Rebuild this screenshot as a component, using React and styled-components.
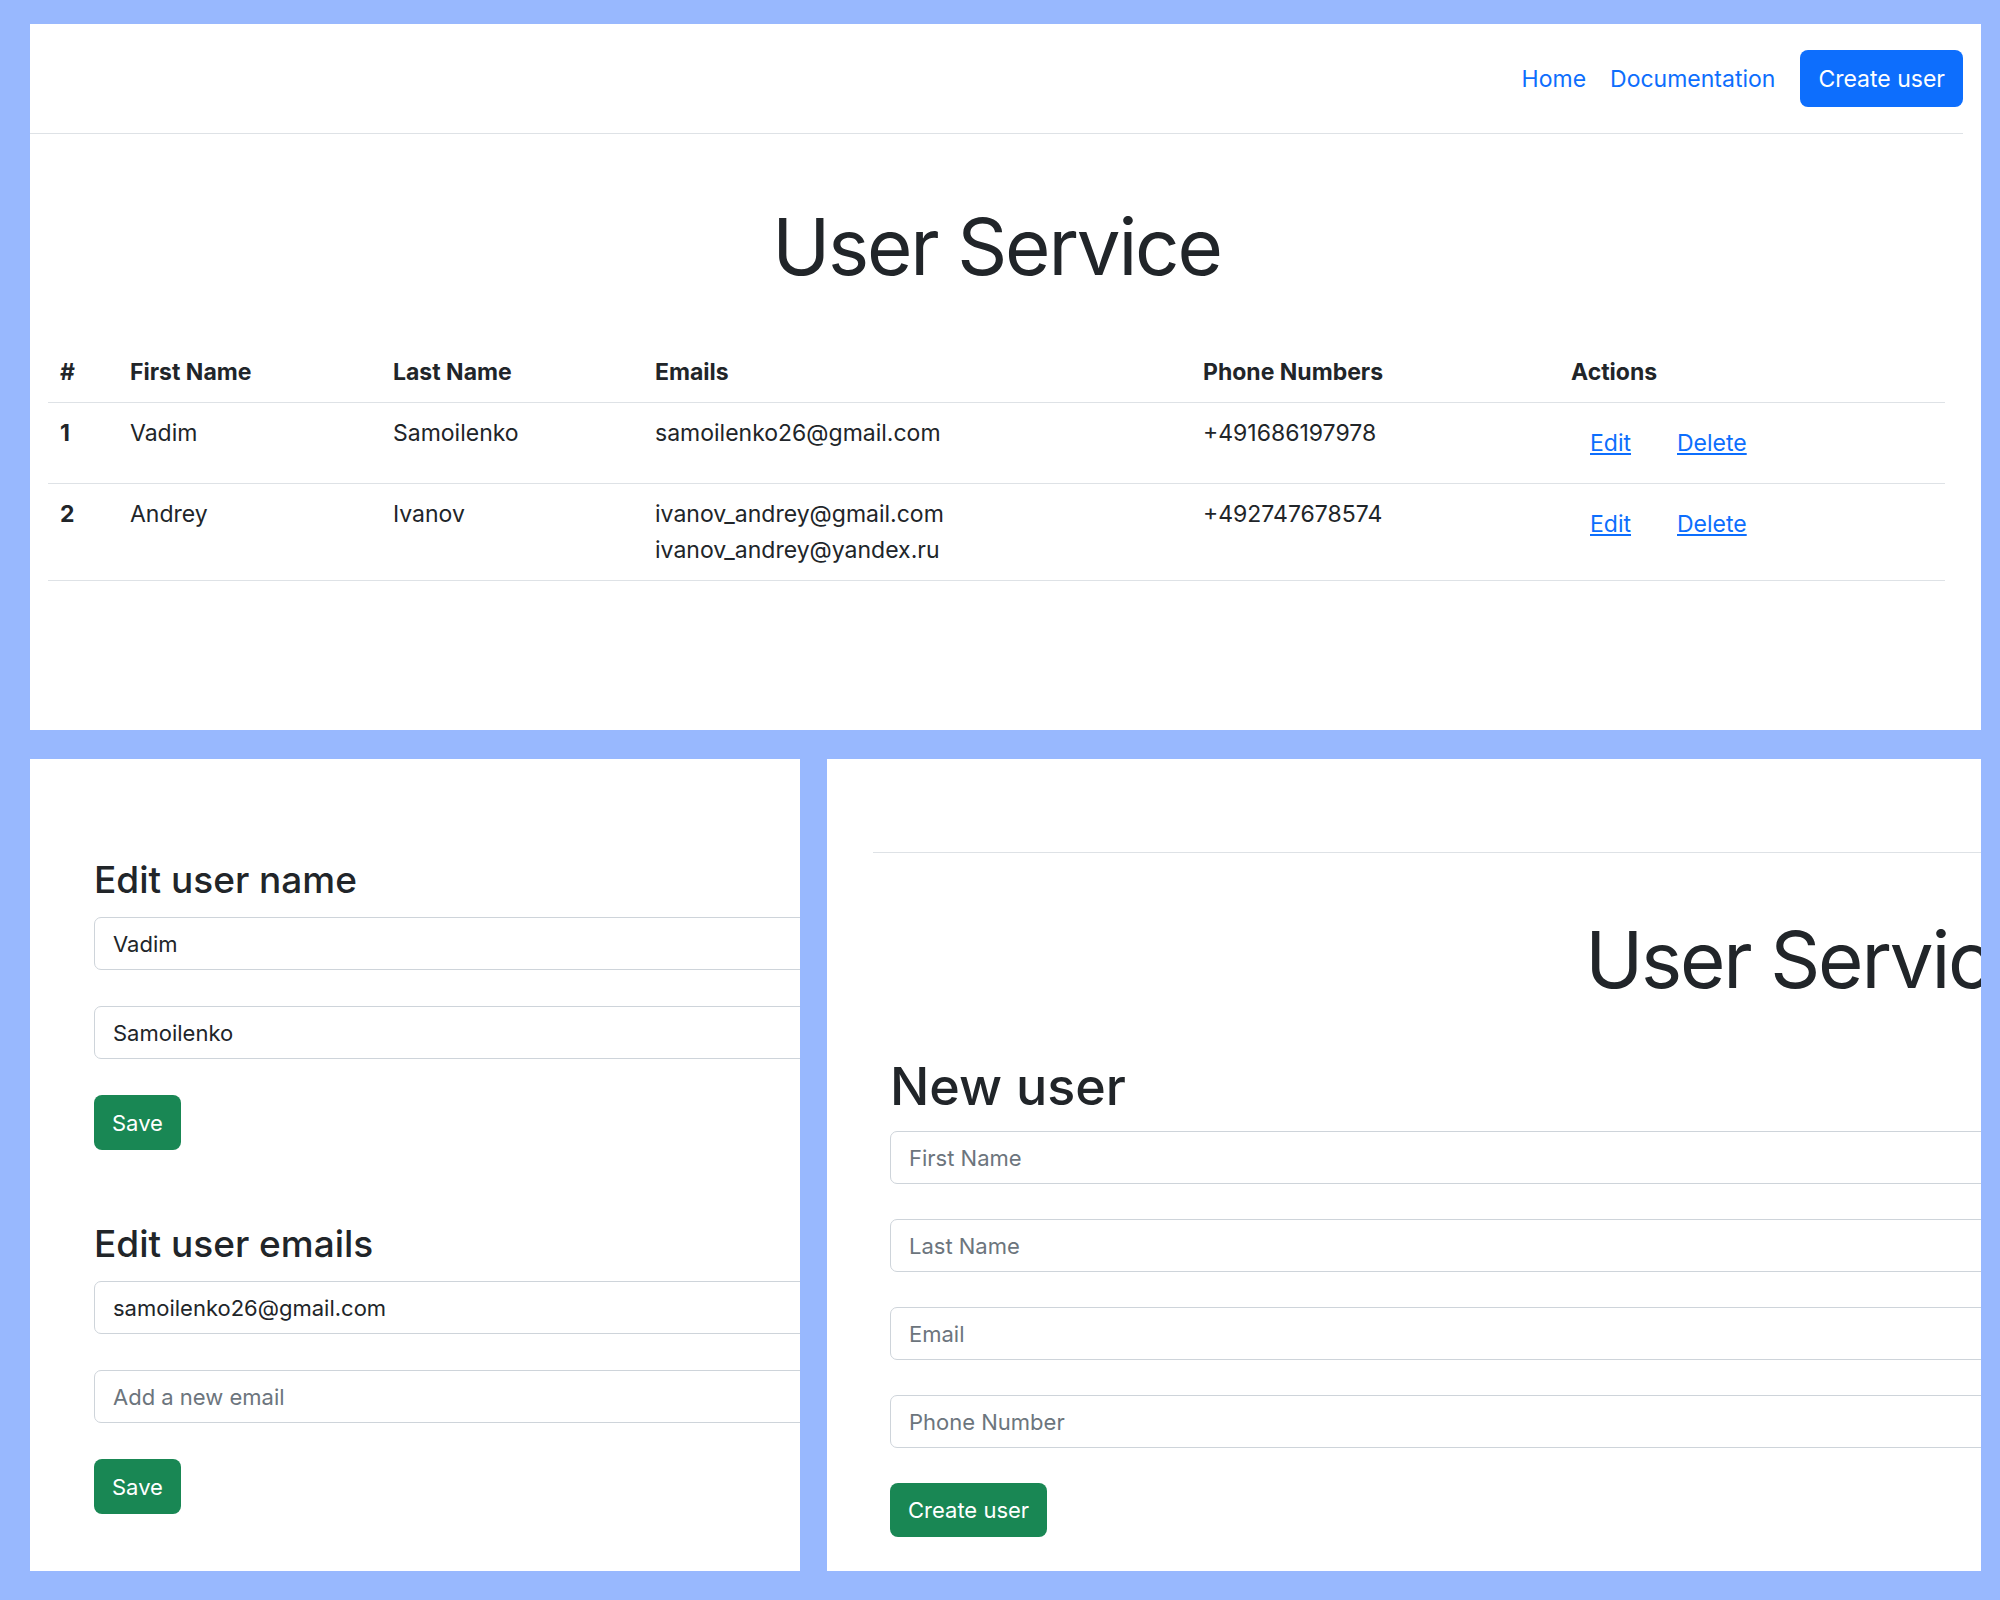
import React from 'react';
import styled, { createGlobalStyle } from 'styled-components';

const GlobalStyle = createGlobalStyle`
  html, body {
    margin: 0;
    padding: 0;
  }
  body {
    background: #98b8fe;
    font-family: Inter, "Noto Sans", "Liberation Sans", sans-serif;
    color: #212529;
    overflow: hidden;
  }
  * {
    box-sizing: border-box;
  }
`;

const Page = styled.div`
  width: 2000px;
  height: 1600px;
  padding: 24px 19px 29px 30px;
  display: grid;
  grid-template-rows: 706px 812px;
  row-gap: 29px;
  background: #98b8fe;
`;

const Panel = styled.section`
  background: #ffffff;
  overflow: hidden;
  min-width: 0;
`;

const BottomRow = styled.div`
  display: grid;
  grid-template-columns: 770px 1154px;
  column-gap: 27px;
`;

// ---- top panel: the users list page ----

const Navbar = styled.nav`
  height: ${p => p.$height || 110}px;
  margin-right: ${p => p.$right || 0}px;
  border-bottom: 1px solid #dee2e6;
  display: flex;
  justify-content: flex-end;
  align-items: center;
`;

const NavLink = styled.a`
  padding: 0 12px;
  font-size: 23px;
  line-height: 36px;
  color: #0d6efd;
  text-decoration: none;
`;

const NavButton = styled.button`
  margin-left: 13px;
  height: 57px;
  padding: 0 18px;
  border: none;
  border-radius: 8px;
  background: #0d6efd;
  color: #ffffff;
  font-family: inherit;
  font-size: 23px;
`;

const Container = styled.main`
  margin: 0 36px 0 18px;
`;

const Title = styled.h1`
  margin: ${p => p.$top}px 0 ${p => p.$bottom}px;
  font-size: ${p => p.$size}px;
  line-height: 94px;
  font-weight: 400;
  letter-spacing: -2.2px;
  text-align: center;
  white-space: nowrap;
`;

const UsersTable = styled.table`
  width: 100%;
  border-collapse: collapse;
  table-layout: fixed;
  font-size: 23px;
  line-height: 36px;

  th, td {
    padding: 12px;
    text-align: left;
    vertical-align: top;
    border-bottom: 1px solid #dee2e6;
  }

  th {
    font-weight: 700;
  }
`;

const EmailLine = styled.div`
  white-space: nowrap;
`;

const Actions = styled.div`
  display: flex;
  gap: 8px;
`;

const ActionButton = styled.button`
  padding: 9px 18px;
  border: 1.5px solid transparent;
  background: none;
  color: #0d6efd;
  font-family: inherit;
  font-size: 23px;
  line-height: 36px;
  text-decoration: underline;
`;

// ---- bottom panels: edit user / new user ----

const EditBody = styled.div`
  width: 1100px;
  padding: 99px 0 0 64px;
`;

const SectionHeading = styled.h3`
  margin: ${p => p.$top || 0}px 0 15px;
  font-size: 37px;
  line-height: 44px;
  font-weight: 500;
`;

const Field = styled.input`
  display: block;
  width: 100%;
  height: 53px;
  margin: 0 0 ${p => p.$gap || 36}px;
  padding: 0 18px;
  border: 1px solid #ced4da;
  border-radius: 7px;
  background: #ffffff;
  color: #212529;
  font-family: inherit;
  font-size: 22px;

  &::placeholder {
    color: #6c757d;
  }
`;

const SuccessButton = styled.button`
  height: ${p => p.$height || 55}px;
  padding: 0 18px;
  border: none;
  border-radius: 8px;
  background: #198754;
  color: #ffffff;
  font-family: inherit;
  font-size: 22px;
`;

const Sheet = styled.div`
  width: 1856px;
  margin-left: 46px;
`;

const SheetBody = styled.div`
  padding: 0 0 0 17px;
`;

const FormHeading = styled.h1`
  margin: 49px 0 13px;
  font-size: 52px;
  line-height: 62px;
  font-weight: 500;
`;

const users = [
  { id: 1, first: 'Vadim', last: 'Samoilenko', emails: ['samoilenko26@gmail.com'], phone: '+491686197978' },
  { id: 2, first: 'Andrey', last: 'Ivanov', emails: ['ivanov_andrey@gmail.com', 'ivanov_andrey@yandex.ru'], phone: '+492747678574' },
];

const columns = [70, 263, 262, 548, 368, 386];

function UserList() {
  return (
    <Panel>
      <Navbar $right={18}>
        <NavLink href="#">Home</NavLink>
        <NavLink href="#">Documentation</NavLink>
        <NavButton>Create user</NavButton>
      </Navbar>
      <Container>
        <Title $size={78} $top={66} $bottom={48}>User Service</Title>
        <UsersTable>
          <colgroup>
            {columns.map((w, i) => <col key={i} style={{ width: w }} />)}
          </colgroup>
          <thead>
            <tr>
              <th>#</th>
              <th>First Name</th>
              <th>Last Name</th>
              <th>Emails</th>
              <th>Phone Numbers</th>
              <th>Actions</th>
            </tr>
          </thead>
          <tbody>
            {users.map(u => (
              <tr key={u.id}>
                <th>{u.id}</th>
                <td>{u.first}</td>
                <td>{u.last}</td>
                <td>{u.emails.map(e => <EmailLine key={e}>{e}</EmailLine>)}</td>
                <td>{u.phone}</td>
                <td>
                  <Actions>
                    <ActionButton>Edit</ActionButton>
                    <ActionButton>Delete</ActionButton>
                  </Actions>
                </td>
              </tr>
            ))}
          </tbody>
        </UsersTable>
      </Container>
    </Panel>
  );
}

function EditUser() {
  return (
    <Panel>
      <EditBody>
        <SectionHeading>Edit user name</SectionHeading>
        <Field defaultValue="Vadim" />
        <Field defaultValue="Samoilenko" />
        <SuccessButton>Save</SuccessButton>

        <SectionHeading $top={72}>Edit user emails</SectionHeading>
        <Field defaultValue="samoilenko26@gmail.com" />
        <Field placeholder="Add a new email" />
        <SuccessButton>Save</SuccessButton>
      </EditBody>
    </Panel>
  );
}

function NewUser() {
  return (
    <Panel>
      <Sheet>
        <Navbar $height={94} />
        <SheetBody>
          <Title $size={78} $top={60} $bottom={0}>User Service</Title>
          <FormHeading>New user</FormHeading>
          <Field $gap={35} placeholder="First Name" />
          <Field $gap={35} placeholder="Last Name" />
          <Field $gap={35} placeholder="Email" />
          <Field $gap={35} placeholder="Phone Number" />
          <SuccessButton $height={54}>Create user</SuccessButton>
        </SheetBody>
      </Sheet>
    </Panel>
  );
}

export default function App() {
  return (
    <>
      <GlobalStyle />
      <Page>
        <UserList />
        <BottomRow>
          <EditUser />
          <NewUser />
        </BottomRow>
      </Page>
    </>
  );
}
